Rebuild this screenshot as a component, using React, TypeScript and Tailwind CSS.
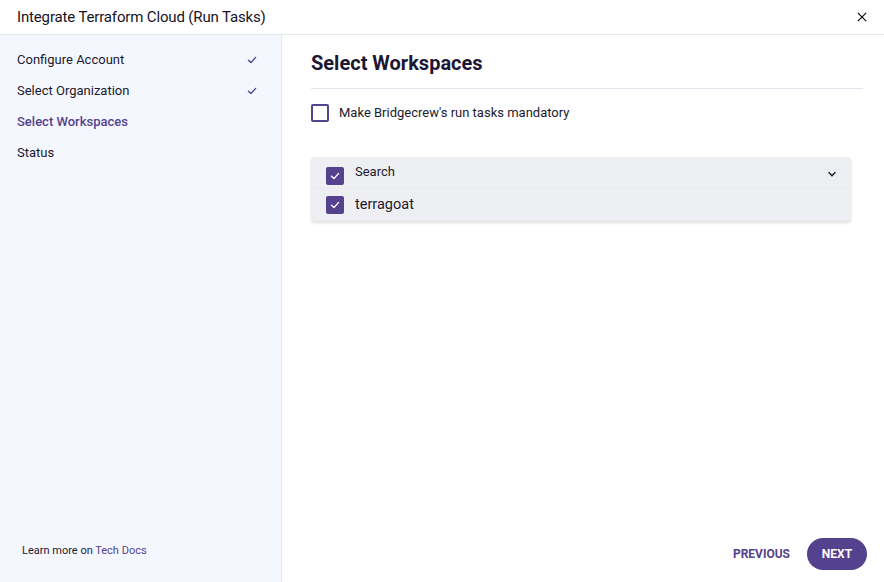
import React from "react";

const Check = ({ className = "" }: { className?: string }) => (
  <svg viewBox="0 0 12 12" className={className} fill="none" stroke="currentColor" strokeWidth="1.4" strokeLinecap="round" strokeLinejoin="round">
    <path d="M2.5 6.3 L5 8.6 L9.6 3.4" />
  </svg>
);

const Box = () => (
  <div className="w-[18px] h-[18px] rounded-[2px] bg-[#54428e] flex items-center justify-center text-white">
    <Check className="w-[12px] h-[12px]" />
  </div>
);

export default function App() {
  const steps = [
    { label: "Configure Account", done: true },
    { label: "Select Organization", done: true },
    { label: "Select Workspaces", active: true },
    { label: "Status" },
  ];
  return (
    <div className="w-[884px] h-[582px] bg-white flex flex-col text-[#1c1a2e]" style={{ fontFamily: "Roboto, 'Liberation Sans', sans-serif" }}>
      <div className="h-[35px] shrink-0 border-b border-[#e6e6ee] flex items-center justify-between pl-[17px] pr-[17px]">
        <div className="text-[15px] tracking-[-0.15px] text-[#16141f]">Integrate Terraform Cloud (Run Tasks)</div>
        <svg viewBox="0 0 12 12" className="w-[10px] h-[10px]" stroke="#111" strokeWidth="1.5">
          <path d="M1 1 L11 11 M11 1 L1 11" />
        </svg>
      </div>
      <div className="flex flex-1 min-h-0">
        <div className="w-[282px] shrink-0 bg-[#f5f7fe] border-r border-[#e4e4ec] flex flex-col justify-between">
          <div className="pt-[9px] pl-[17px] pr-[23px] flex flex-col">
            {steps.map((s) => (
              <div key={s.label} className="h-[31px] flex items-center justify-between">
                <span className={s.active ? "text-[13px] font-medium text-[#54428e]" : "text-[13px] text-[#1c1a2e]"}>{s.label}</span>
                {s.done && <Check className="w-[12px] h-[12px] text-[#54428e]" />}
              </div>
            ))}
          </div>
          <div className="pl-[22px] pb-[23px] text-[11px] text-[#1c1a2e]">
            Learn more on <span className="text-[#54428e]">Tech Docs</span>
          </div>
        </div>
        <div className="flex-1 flex flex-col justify-between pl-[29px] pr-[17px]">
          <div className="pr-[4px]">
            <div className="pt-[16px] pb-[13px] border-b border-[#e4e4ee] text-[20px] font-bold text-[#1c1733] leading-[24px]">Select Workspaces</div>
            <div className="mt-[14px] flex items-center gap-[10px]">
              <div className="w-[18px] h-[18px] rounded-[2px] border-2 border-[#54428e]" />
              <span className="text-[13px] text-[#1c1a2e]">Make Bridgecrew's run tasks mandatory</span>
            </div>
            <div className="mt-[34px] w-[540px] rounded-[3px] bg-[#eeeff3] shadow-[0_2px_3px_rgba(0,0,0,0.12)]">
              <div className="h-[32px] flex items-center justify-between pl-[15px] pr-[14px] border-b border-[#e9eaee]">
                <div className="flex items-center gap-[11px]">
                  <div className="pt-[7px]"><Box /></div>
                  <span className="text-[13px] text-[#1c1a2e] -mt-[1px]">Search</span>
                </div>
                <svg viewBox="0 0 12 12" className="w-[10px] h-[10px] mt-[4px]" fill="none" stroke="#1c1a2e" strokeWidth="1.8">
                  <path d="M2 4 L6 8 L10 4" />
                </svg>
              </div>
              <div className="h-[32px] flex items-center pl-[15px] gap-[11px] pt-[1px]">
                <Box />
                <span className="text-[14.5px] text-[#1c1a2e]">terragoat</span>
              </div>
            </div>
          </div>
          <div className="flex justify-end items-center gap-[17px] pb-[12px]">
            <span className="text-[12px] font-bold text-[#54428e]">PREVIOUS</span>
            <div className="h-[32px] w-[60px] rounded-full bg-[#54428e] text-white text-[12px] font-bold flex items-center justify-center">NEXT</div>
          </div>
        </div>
      </div>
    </div>
  );
}
